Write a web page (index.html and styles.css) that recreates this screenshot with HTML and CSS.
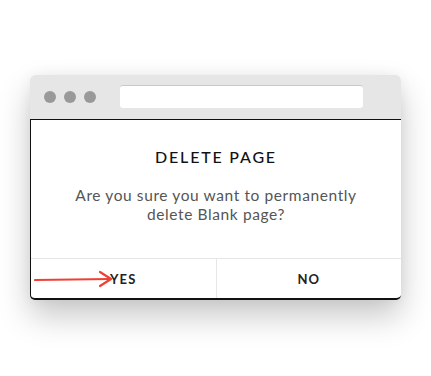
FILE: index.html
```html
<!DOCTYPE html>
<html>
<head>
<meta charset="utf-8">
<link rel="stylesheet" href="styles.css">
</head>
<body>
<div class="window">
  <div class="titlebar">
    <div class="dots"><span class="dot"></span><span class="dot"></span><span class="dot"></span></div>
    <div class="address"></div>
  </div>
  <div class="dialog">
    <div class="content">
      <h1 class="title">DELETE PAGE</h1>
      <p class="message">Are you sure you want to permanently<br>delete Blank page?</p>
    </div>
    <div class="actions">
      <div class="btn yes">
        <svg class="arrow" width="80" height="20" viewBox="0 0 80 20">
          <path d="M1 11 L76 10" stroke="#ee4035" stroke-width="2.2" fill="none" stroke-linecap="round"/>
          <path d="M66 3 L77 10 L66 17" stroke="#ee4035" stroke-width="2.2" fill="none" stroke-linecap="round" stroke-linejoin="round"/>
        </svg>
        YES
      </div>
      <div class="btn no">NO</div>
    </div>
  </div>
</div>
</body>
</html>
```
FILE: styles.css
```css
html, body {
  margin: 0;
  padding: 0;
  background: #ffffff;
}
body {
  padding: 75px 0 60px 30px;
  font-family: Lato, "Open Sans", sans-serif;
}
.window {
  width: 371px;
  height: 225px;
  border-radius: 6px 6px 5px 5px;
  background: #e6e6e6;
  box-shadow: 0 16px 32px rgba(0, 0, 0, 0.22), 0 0 14px rgba(0, 0, 0, 0.05);
  display: flex;
  flex-direction: column;
}
.titlebar {
  height: 44px;
  display: flex;
  align-items: center;
  padding: 0 0 0 14px;
  gap: 24px;
}
.dots {
  display: flex;
  gap: 8px;
}
.dot {
  width: 12px;
  height: 12px;
  border-radius: 50%;
  background: #999999;
}
.address {
  width: 243px;
  height: 23px;
  background: #ffffff;
  border-radius: 3px;
  border-top: 1px solid #c9c9c9;
  box-sizing: border-box;
  margin-top: -1px;
}
.dialog {
  flex: 1;
  background: #ffffff;
  border-top: 1px solid #111;
  border-left: 1px solid #111;
  border-bottom: 2px solid #111;
  border-radius: 0 0 5px 5px;
  display: flex;
  flex-direction: column;
}
.content {
  flex: 1;
  text-align: center;
}
.title {
  margin: 27px 0 0;
  font-size: 16px;
  font-weight: 500;
  letter-spacing: 1.8px;
  color: #111;
  line-height: 20px;
}
.message {
  margin: 19px 0 0;
  font-size: 15.5px;
  line-height: 19px;
  color: #555;
  letter-spacing: 0.6px;
}
.actions {
  height: 39px;
  border-top: 1px solid #e6e6e6;
  display: flex;
}
.btn {
  flex: 1;
  display: flex;
  align-items: center;
  justify-content: center;
  font-size: 13px;
  font-weight: 700;
  color: #222;
  letter-spacing: 1.1px;
  position: relative;
}
.yes {
  border-right: 1px solid #e6e6e6;
}
.arrow {
  position: absolute;
  left: 3px;
  top: 10px;
}
```
